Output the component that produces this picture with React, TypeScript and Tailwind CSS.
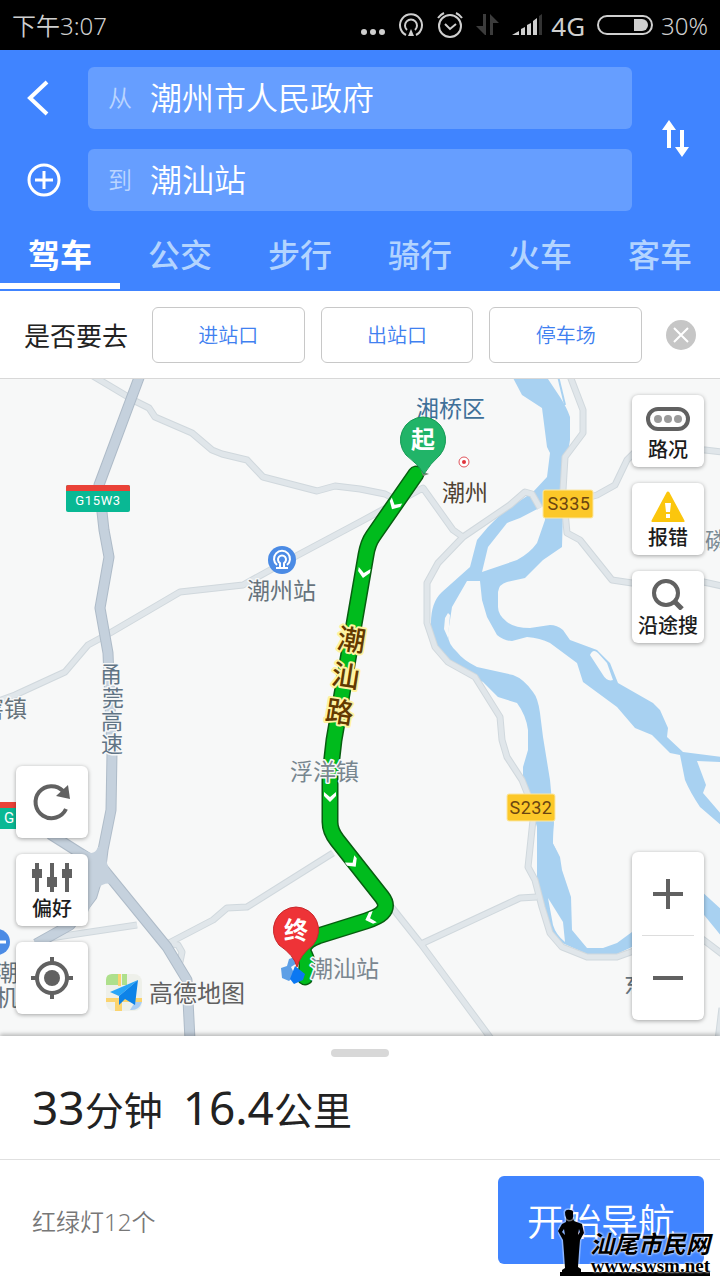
import type { ReactNode } from 'react'

const MODES = ['驾车', '公交', '步行', '骑行', '火车', '客车']
const SUGGESTIONS = ['进站口', '出站口', '停车场']

const FONT = "font-['Noto_Sans','Noto_Sans_CJK_SC',sans-serif]"

function StatusBar() {
  return (
    <div className="flex h-[50px] items-center bg-black px-3 text-2xl text-[#cfcfcf]">
      <span className="pt-[2px] font-[350]">下午3:07</span>
      <div className="ml-auto flex items-center">
        <svg width="26" height="28" viewBox="0 0 26 28" fill="currentColor">
          <circle cx="4" cy="21" r="3" />
          <circle cx="13" cy="21" r="3" />
          <circle cx="22" cy="21" r="3" />
        </svg>
        {/* hotspot */}
        <svg className="ml-3" width="26" height="28" viewBox="0 0 26 28" fill="none" stroke="currentColor" strokeWidth="2">
          <path d="M8 24A11 11 0 1 1 18 24" />
          <path d="M9 19A6 6 0 1 1 17 19" />
          <path d="M13 18l3 7h-6z" fill="currentColor" stroke="none" />
        </svg>
        {/* alarm */}
        <svg className="ml-3" width="28" height="28" viewBox="0 0 28 28" fill="none" stroke="currentColor" strokeWidth="2">
          <circle cx="14" cy="15" r="11" />
          <path d="M9 13l5 5 6-5M2 7a15 15 0 0 1 6-5M26 7a15 15 0 0 0-6-5" />
        </svg>
        {/* data */}
        <svg className="ml-3" width="24" height="28" viewBox="0 0 24 28" fill="#3c3c3c">
          <path d="M7 3h3v21H9L0 15h7zM14 3l9 9h-6v12h-3z" />
        </svg>
        {/* signal */}
        <svg className="ml-3" width="31" height="28" viewBox="0 0 31 28" fill="currentColor">
          <path d="M0 24l7-4v4zM9 18l4-2v8H9zM15 14l4-2v12h-4zM21 10l4-3v17h-4z" />
          <path d="M27 5l3-2v21h-3z" fill="#333" />
        </svg>
        <span className="ml-2 pt-[2px] text-[26px]">4G</span>
        <svg className="ml-3" width="56" height="22" viewBox="0 0 56 22" fill="none">
          <rect x="1" y="2" width="54" height="18" rx="9" stroke="currentColor" strokeWidth="2" />
          <path d="M37 5h8a6 6 0 0 1 0 12h-8z" fill="currentColor" />
        </svg>
        <span className="ml-2 pt-[2px] font-[350]">30%</span>
      </div>
    </div>
  )
}

function PlaceField({ id, label, value }: { id: string; label: string; value: string }) {
  return (
    <div className="flex h-[62px] items-center rounded-md bg-[#669eff] pl-5">
      <label htmlFor={id} className="w-[42px] shrink-0 text-2xl font-[350] text-[#bad5ff]">
        {label}
      </label>
      <input
        id={id}
        defaultValue={value}
        className="min-w-0 flex-1 bg-transparent text-[32px] font-[350] leading-10 text-white outline-none"
      />
    </div>
  )
}

function RouteHeader() {
  return (
    <header className="bg-[#4084ff]">
      <div className="grid grid-cols-[88px_1fr_88px] items-center pt-[17px]">
        <div className="flex flex-col gap-5">
          <button aria-label="返回" className="flex h-[62px] items-center pl-[26px]">
            <svg width="24" height="36" viewBox="0 0 24 36" fill="none" stroke="#fff" strokeWidth="4">
              <path d="M21 2L4 18l17 16" />
            </svg>
          </button>
          <button aria-label="添加途经点" className="flex h-[62px] items-center pl-[27px]">
            <svg width="34" height="34" viewBox="0 0 34 34" fill="none" stroke="#fff" strokeWidth="3">
              <circle cx="17" cy="17" r="15" />
              <path d="M17 8v18M8 17h18" />
            </svg>
          </button>
        </div>
        <div className="flex flex-col gap-5">
          <PlaceField id="from" label="从" value="潮州市人民政府" />
          <PlaceField id="to" label="到" value="潮汕站" />
        </div>
        <button aria-label="交换起终点" className="flex justify-center">
          <svg width="28" height="38" viewBox="0 0 28 38" fill="#fff">
            <path d="M7 0l7 10H9v18H5V10H0zM18 10h4v17h5l-7 10-7-10h5z" />
          </svg>
        </button>
      </div>
      <nav className="grid h-20 grid-cols-6">
        {MODES.map((mode, i) => (
          <button
            key={mode}
            className={
              i === 0
                ? 'mb-[2px] border-b-[6px] border-white pt-4 text-[32px] font-bold leading-10 text-white'
                : 'mb-[2px] border-b-[6px] border-transparent pt-4 text-[32px] font-medium leading-10 text-[#b3d4ff]'
            }
          >
            {mode}
          </button>
        ))}
      </nav>
    </header>
  )
}

function Suggestions() {
  return (
    <div className="flex h-[88px] items-center border-b border-[#d8d8d8] bg-white pl-6">
      <span className="w-32 shrink-0 pt-1 text-[26px] text-[#222]">是否要去</span>
      <div className="grid flex-1 grid-cols-3 gap-4">
        {SUGGESTIONS.map((s) => (
          <button key={s} className="h-14 rounded-md border border-[#c8c8c8] pt-[2px] text-xl font-[350] text-[#4080f0]">
            {s}
          </button>
        ))}
      </div>
      <button aria-label="关闭" className="flex w-[78px] justify-center">
        <svg width="30" height="30" viewBox="0 0 30 30">
          <circle cx="15" cy="15" r="15" fill="#c6c6c6" />
          <path d="M8 8l14 14M22 8L8 22" stroke="#fff" strokeWidth="2" />
        </svg>
      </button>
    </div>
  )
}

const HIGHWAYS = [
  'M140 375L99 485L104 530L109 557L100 608L108 653L112 753L111 810L103 850L101 866L167 947L187 980L190 1040',
  'M50 834L80 853L101 866L92 896L70 925L36 944',
]

const ROADS = [
  'M93 376L135 401L149 408L155 417L192 433L212 450L222 454L247 460L263 477L317 491L335 486L360 489L385 494L400 502',
  'M-4 702L15 695L65 672L88 645L110 633L180 592L243 585L283 563L360 522L423 488L453 530L463 537',
  'M540 508L532 494L525 492L510 505L463 537L438 563L427 583L427 623L435 647L448 662L475 677L500 717L502 740L507 757L522 780L530 800L533 820L528 867L535 880L542 907L550 933L562 947L587 957L617 957L645 947L690 930L705 941L722 954',
  'M570 376L583 410L583 433L565 457L563 490L567 533L580 540L612 580L632 583L690 579L722 586',
  'M590 497L597 495L615 485L627 460L640 447L705 450L722 452',
  'M50 938L137 925',
  'M168 943L178 945L182 952L180 962',
  'M167 944L213 920L227 908L247 907L333 853',
  'M390 905L421 944L492 1040M421 944L520 898L537 897',
  'M722 1008L718 1040',
]

const RIVER =
  'M512 376L522 395L542 408L547 447L550 453L547 477L533 492L503 512L488 527L477 540L470 567L442 592Q430 603 431 627Q431 642 438 650Q450 665 483 682L498 697L517 703Q526 715 528 730L528 750L523 767L523 780L527 793L537 827L537 883L542 910L550 930L560 942L587 954L617 954L632 947L700 910L722 937L722 910L700 890L632 932L617 943L603 948L587 948L572 930L571 897L562 870L560 857L553 843L554 823L550 780L543 737L540 713Q538 698 533 692Q524 679 513 675L477 667Q463 660 457 652Q447 643 448 633L452 607L467 581L480 581L482 600L487 617L497 635Q504 641 512 641L527 637Q540 638 550 643L577 663L583 682L617 707L635 728L652 735L670 753L680 755L685 780Q690 792 700 807L722 826L722 815L703 793L706 785L697 761L722 762L722 757L683 752L667 737L668 728L660 710L653 703L618 683L610 663L597 650L570 640L563 630Q557 625 550 625L530 628Q515 628 507 622Q498 615 498 607L498 592Q499 584 507 582L525 578L543 560L562 547L564 477L570 440L570 417Q567 408 560 397L546 376Z'

const ISLANDS =
  'M545 505L545 520L537 543Q530 553 517 560L482 572L488 547L507 523L520 518ZM590 655Q593 648 598 653L607 663L613 680Q607 682 603 675ZM448 613L450 615L448 638L444 629L445 618ZM548 898L563 922L565 942Q556 935 553 925ZM554 825Q562 842 557 850L553 843Z'

const ROUTE =
  'M416 474L373 536Q368 543 366 555L334 740L330 775V822Q330 831 337 840L382 897Q389 906 382 913Q378 917 366 921L318 936Q302 942 303 952Q310 962 305 977'

const CHEVRONS = [
  [395, 504, 30],
  [364, 572, 10],
  [330, 796, 0],
  [352, 862, -38],
  [371, 918, 70],
]

const TOWNS = [
  { x: 416, y: 417, text: '湘桥区', fill: '#3f7099' },
  { x: 442, y: 501, text: '潮州', fill: '#4f4233' },
  { x: 247, y: 599, text: '潮州站', fill: '#66737c' },
  { x: 290, y: 780, text: '浮洋镇', fill: '#77868f' },
  { x: 310, y: 977, text: '潮汕站', fill: '#7b8790' },
  { x: -19, y: 717, text: '窖镇', fill: '#66737c' },
  { x: 705, y: 549, text: '磷', fill: '#7b8b95' },
  { x: 624, y: 993, text: '东', fill: '#66737c' },
  { x: -5, y: 981, text: '潮', fill: '#66737c' },
  { x: -5, y: 1006, text: '机', fill: '#66737c' },
]

function MapCanvas() {
  return (
    <svg
      className="absolute inset-0 h-full w-full"
      viewBox="0 379 720 657"
      preserveAspectRatio="xMidYMid slice"
      strokeLinejoin="round"
    >
      <rect x="-720" y="0" width="2160" height="2000" fill="#f7f8f8" />
      <path d={RIVER} fill="#a8d1f1" />
      <path d={ISLANDS} fill="#f7f8f8" />
      <path d="M558 376L565 405" stroke="#a8d1f1" strokeWidth="2" />

      <g fill="none">
        {ROADS.map((d) => (
          <path key={d} d={d} stroke="#d0d8dd" strokeWidth="7" />
        ))}
        {ROADS.map((d) => (
          <path key={d} d={d} stroke="#e0e6ea" strokeWidth="5" />
        ))}
        {HIGHWAYS.map((d) => (
          <path key={d} d={d} stroke="#aebbc8" strokeWidth="11" />
        ))}
        {HIGHWAYS.map((d) => (
          <path key={d} d={d} stroke="#c5d1dd" strokeWidth="9" />
        ))}
      </g>
      <path
        d="M84 850Q94 857 98 847L107 847Q104 863 111 872L117 886Q106 880 98 888L88 912L86 878Z"
        fill="#c5d1dd"
      />

      {/* road shields */}
      <rect x="66" y="485" width="64" height="27" rx="2" fill="#09b894" />
      <path d="M66 491v-4q0-2 2-2h60q2 0 2 2v4z" fill="#ea4238" />
      <text x="98" y="505" textAnchor="middle" fontSize="13" fill="#fff" className="font-['Roboto',sans-serif] tracking-wider">
        G15W3
      </text>
      <rect x="-20" y="802" width="64" height="27" fill="#09b894" />
      <rect x="-20" y="802" width="64" height="6" fill="#ea4238" />
      <text x="4" y="823" fontSize="15" fill="#fff" className="font-['Roboto',sans-serif]">
        G
      </text>
      <g fontSize="18" textAnchor="middle" fill="#6b4510" className="font-['Roboto',sans-serif] tracking-wide">
        <rect x="543" y="490" width="50" height="28" rx="2" fill="#fcc829" stroke="#fbe7a4" />
        <text x="569" y="510">S335</text>
        <rect x="507" y="794" width="48" height="27" rx="2" fill="#fcc829" stroke="#fbe7a4" />
        <text x="531" y="814">S232</text>
      </g>

      {/* station */}
      <circle cx="282" cy="560" r="14" fill="#4b8be5" />
      <g fill="none" stroke="#fff" strokeWidth="2">
        <path d="M277 565A8 8 0 1 1 287 565" />
        <path d="M276 568h12M280 567v-4a4 4 0 1 1 4 0v4" />
      </g>
      <circle cx="-3" cy="942" r="13" fill="#4b8be5" />
      <path d="M-8 942H6" stroke="#fff" strokeWidth="3" />

      {/* planned route */}
      <g fill="none" strokeLinecap="round">
        <path d={ROUTE} stroke="#075e10" strokeWidth="17" />
        <path d={ROUTE} stroke="#00bb1d" strokeWidth="14" />
      </g>
      {CHEVRONS.map(([x, y, angle]) => (
        <path
          key={y}
          d="M-6 -4L0 1L6 -4V0L0 6L-6 0Z"
          fill="#fff"
          transform={`translate(${x} ${y}) rotate(${angle})`}
        />
      ))}

      <g fontSize="23" stroke="#f7f8f8" strokeWidth="3" paintOrder="stroke">
        {TOWNS.map((t) => (
          <text key={t.text} x={t.x} y={t.y} fill={t.fill}>
            {t.text}
          </text>
        ))}
        <g textAnchor="middle" fontSize="22" fill="#607485">
          <text x="111" y="682">甬</text>
          <text x="113" y="706">莞</text>
          <text x="112" y="729">高</text>
          <text x="112" y="752">速</text>
        </g>
      </g>
      <g fontSize="28" textAnchor="middle" fill="#633900" stroke="#fff3a0" strokeWidth="4" paintOrder="stroke" className="font-medium">
        <text transform="translate(350 650) rotate(9)">潮</text>
        <text transform="translate(344 686) rotate(9)">汕</text>
        <text transform="translate(338 722) rotate(9)">路</text>
      </g>

      <circle cx="464" cy="462" r="5" fill="#fff" stroke="#e0545c" />
      <circle cx="464" cy="462" r="2" fill="#e0343c" />

      {/* start and end pins */}
      <path d="M421 471l8 3-6 2z" fill="#6d8a72" />
      <path d="M423 417a23 23 0 0 1 17 38Q430 464 424 474Q418 464 406 455A23 23 0 0 1 423 417Z" fill="#21b468" stroke="#169a55" />
      <path d="M281 968l6-2 2-7 6-2 2 6-6 4 4 8-6 6-7-3z" fill="#5d9fe6" />
      <path d="M290 979l5-13 10 8-2 6-9 4z" fill="#0b78f2" />
      <path d="M296 907a23 23 0 0 1 17 38Q300 955 297 967Q294 955 279 945A23 23 0 0 1 296 907Z" fill="#ee3337" stroke="#c8282c" />
      <g fontSize="24" textAnchor="middle" fill="#fff" className="font-bold">
        <text x="423" y="448">起</text>
        <text x="296" y="939">终</text>
      </g>

      {/* map brand */}
      <rect x="106" y="974" width="36" height="37" rx="8" fill="#eef0ea" />
      <path d="M106 985v-5q0-6 6-6h8v11zM122 974h5v11h-5z" fill="#aee08c" />
      <path d="M118 974h3v12h-3zM106 998h36v4H122v9h-7v-9h-9z" fill="#fbd46e" />
      <path d="M130 1010q9 1 12-8h-7z" fill="#a9cdf5" />
      <path d="M138 980L110 992l9 4z" fill="#29a5f7" />
      <path d="M138 980l-19 16v9l6-6 10 6z" fill="#0d83e8" />
      <text x="149" y="1002" fontSize="24" fill="#606060" stroke="#f7f8f8" strokeWidth="3" paintOrder="stroke">
        高德地图
      </text>
    </svg>
  )
}

function MapButton({ label, caption, children }: { label: string; caption?: boolean; children: ReactNode }) {
  return (
    <button
      aria-label={label}
      className="flex h-[72px] w-[72px] flex-col items-center justify-center rounded-md bg-white text-xl leading-6 text-[#1c1c1c] shadow-[0_1px_4px_rgba(0,0,0,0.35)]"
    >
      {children}
      {caption && <span className="whitespace-nowrap pt-1 font-medium">{label}</span>}
    </button>
  )
}

function MapControls() {
  return (
    <>
      <div className="absolute right-4 top-4 flex flex-col gap-4">
        <MapButton label="路况" caption>
          <svg width="44" height="34" viewBox="0 0 44 34">
            <rect x="2" y="9" width="40" height="20" rx="10" fill="#fff" stroke="#616161" strokeWidth="4" />
            <g fill="#9b9b9b">
              <circle cx="12" cy="19" r="4" />
              <circle cx="22" cy="19" r="4" />
              <circle cx="32" cy="19" r="4" />
            </g>
          </svg>
        </MapButton>
        <MapButton label="报错" caption>
          <svg width="36" height="34" viewBox="0 0 36 34">
            <path d="M18 5L33 33H3z" fill="#fbc60d" stroke="#fbc60d" strokeWidth="3" strokeLinejoin="round" />
            <path d="M15 15h6l-1 9h-4zM16 26h4v4h-4z" fill="#fff" />
          </svg>
        </MapButton>
        <MapButton label="沿途搜" caption>
          <svg width="36" height="34" viewBox="0 0 36 34" fill="none" stroke="#616161" strokeWidth="4">
            <circle cx="16" cy="17" r="12" />
            <path d="M25 26l7 7" strokeWidth="5" />
          </svg>
        </MapButton>
      </div>

      <div className="absolute bottom-[22px] left-4 flex flex-col gap-4">
        <MapButton label="刷新">
          <svg width="40" height="40" viewBox="0 0 40 40">
            <path d="M34 27A16 16 0 1 1 31 9" fill="none" stroke="#616161" strokeWidth="4" />
            <path d="M36 3l2 14-14-3z" fill="#616161" />
          </svg>
        </MapButton>
        <MapButton label="偏好" caption>
          <svg width="40" height="34" viewBox="0 0 40 34" fill="#616161">
            <path d="M3 4h4v29H3zM0 10h10v9H0zM18 4h4v29h-4zM15 18h10v10H15zM33 4h4v29h-4zM30 10h10v9H30z" />
          </svg>
        </MapButton>
        <MapButton label="定位">
          <svg width="42" height="42" viewBox="0 0 42 42" fill="none" stroke="#616161" strokeWidth="4">
            <circle cx="21" cy="21" r="15" />
            <circle cx="21" cy="21" r="8" fill="#616161" stroke="none" />
            <path d="M21 0v6M21 36v6M0 21h6M36 21h6" />
          </svg>
        </MapButton>
      </div>

      <div className="absolute bottom-4 right-4 flex w-[72px] flex-col rounded-md bg-white px-[10px] shadow-[0_1px_4px_rgba(0,0,0,0.35)]">
        <button aria-label="放大" className="flex h-[84px] items-center justify-center border-b border-[#ddd]">
          <svg width="30" height="30" viewBox="0 0 30 30" stroke="#616161" strokeWidth="4">
            <path d="M15 0v30M0 15h30" />
          </svg>
        </button>
        <button aria-label="缩小" className="flex h-[84px] items-center justify-center">
          <svg width="30" height="30" viewBox="0 0 30 30" stroke="#616161" strokeWidth="4">
            <path d="M0 15h30" />
          </svg>
        </button>
      </div>
    </>
  )
}

function Watermark() {
  return (
    <div className="absolute bottom-1 right-[10px] w-[152px]">
      <svg className="absolute bottom-0 left-0" width="152" height="68" viewBox="0 0 152 68">
        <g stroke="#fff" strokeOpacity="0.400" strokeWidth="3" paintOrder="stroke">
          <path d="M8 14L4 16L0 23L5 32L6 45L7 60L4 62V65H23V61L20 59L21 44L22 32L26 25L24 16L16 13L15 10H8ZM6 21L7 27L4 24ZM21 21L22 24L20 27Z" fillRule="evenodd" />
          <path d="M7 4Q8 1 12 2Q16 2 15 6Q16 12 11 12Q7 11 7 4Z" />
        </g>
        <path d="M2 64h150v4H2z" />
      </svg>
      <div className="relative pl-7 text-right text-black [text-shadow:0_0_3px_#fff,0_0_2px_#fff]">
        <p className="whitespace-nowrap text-2xl font-bold italic leading-6">汕尾市民网</p>
        <p className="font-['Liberation_Serif',serif] text-[19px] font-bold leading-5">www.swsm.net</p>
      </div>
    </div>
  )
}

function RouteSheet() {
  return (
    <section className="relative bg-white shadow-[0_-2px_4px_rgba(0,0,0,0.25)]">
      <div className="flex justify-center pt-[13px]">
        <span className="h-2 w-[58px] rounded-full bg-[#d8d8d8]" />
      </div>
      <p className="flex h-[103px] items-center gap-5 border-b border-[#e0e0e0] px-8 text-[39px] leading-[56px] text-[#222]">
        <span>
          <span className="text-[46px]">33</span>分钟
        </span>
        <span>
          <span className="text-[46px]">16.4</span>公里
        </span>
      </p>
      <div className="relative flex h-[120px] items-center justify-between pl-8 pr-4">
        <span className="pt-1 text-2xl font-[350] text-[#777]">红绿灯12个</span>
        <button className="h-[88px] w-[206px] rounded-md bg-[#4084ff] pt-1 text-[37px] font-[350] text-white">
          开始导航
        </button>
        <Watermark />
      </div>
    </section>
  )
}

export default function App() {
  return (
    <div className={`flex min-h-screen flex-col bg-white ${FONT}`}>
      <StatusBar />
      <RouteHeader />
      <Suggestions />
      <main className="relative min-h-[600px] flex-1 overflow-hidden">
        <MapCanvas />
        <MapControls />
      </main>
      <RouteSheet />
    </div>
  )
}
